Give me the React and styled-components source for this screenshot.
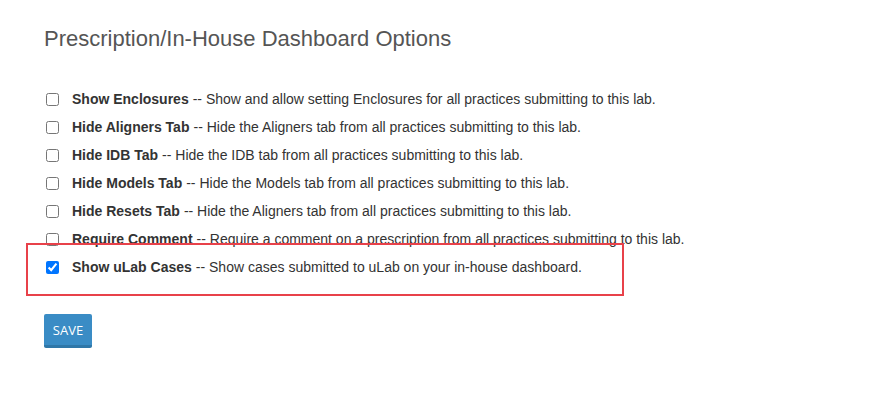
import React, { useState } from "react"
import styled, { createGlobalStyle } from "styled-components"

const Global = createGlobalStyle`
  html, body { margin: 0; padding: 0; background: #fff; }
  body { font-family: "Liberation Sans", Arial, sans-serif; color: #333; }
`;

const Page = styled.div`
  padding: 26px 0 0 44px;
  width: 887px;
  height: 410px;
  box-sizing: border-box;
`;

const Title = styled.h3`
  margin: 0;
  font-size: 22px;
  line-height: 26px;
  font-weight: normal;
  color: #555;
`;

const Options = styled.div`
  position: relative;
  margin-top: 33px;
`;

const Row = styled.label`
  display: flex;
  align-items: center;
  height: 28px;
  font-size: 14px;
  color: #333;
  input {
    width: 13px;
    height: 13px;
    margin: 0 13px 0 2px;
  }
  b { font-weight: bold; margin-right: 4px; }
`;

const Highlight = styled.div`
  position: absolute;
  left: -18px;
  top: 158px;
  width: 598px;
  height: 53px;
  border: 2px solid #e8414a;
  box-sizing: border-box;
  pointer-events: none;
`;

const SaveButton = styled.button`
  margin-top: 33px;
  width: 48px;
  height: 34px;
  padding: 0;
  background: #3a8cc5;
  border: none;
  border-bottom: 3px solid #2f77a8;
  border-radius: 2px;
  color: #fff;
  font-family: "Open Sans", sans-serif;
  font-size: 13px;
  box-sizing: border-box;
  cursor: pointer;
`;

const options = [
  { label: "Show Enclosures", desc: "Show and allow setting Enclosures for all practices submitting to this lab.", on: false },
  { label: "Hide Aligners Tab", desc: "Hide the Aligners tab from all practices submitting to this lab.", on: false },
  { label: "Hide IDB Tab", desc: "Hide the IDB tab from all practices submitting to this lab.", on: false },
  { label: "Hide Models Tab", desc: "Hide the Models tab from all practices submitting to this lab.", on: false },
  { label: "Hide Resets Tab", desc: "Hide the Aligners tab from all practices submitting to this lab.", on: false },
  { label: "Require Comment", desc: "Require a comment on a prescription from all practices submitting to this lab.", on: false },
  { label: "Show uLab Cases", desc: "Show cases submitted to uLab on your in-house dashboard.", on: true },
];

const App = () => {
  const [vals, setVals] = useState(options.map(o => o.on));
  return (
    <Page>
      <Global />
      <Title>Prescription/In-House Dashboard Options</Title>
      <Options>
        {options.map((o, i) =>
          <Row key={i}>
            <input type="checkbox" checked={vals[i]} onChange={() => setVals(v => v.map((x, k) => k === i ? !x : x))} />
            <span><b>{o.label}</b>-- {o.desc}</span>
          </Row>
        )}
        <Highlight />
      </Options>
      <SaveButton>SAVE</SaveButton>
    </Page>
  )
}

export default App;
